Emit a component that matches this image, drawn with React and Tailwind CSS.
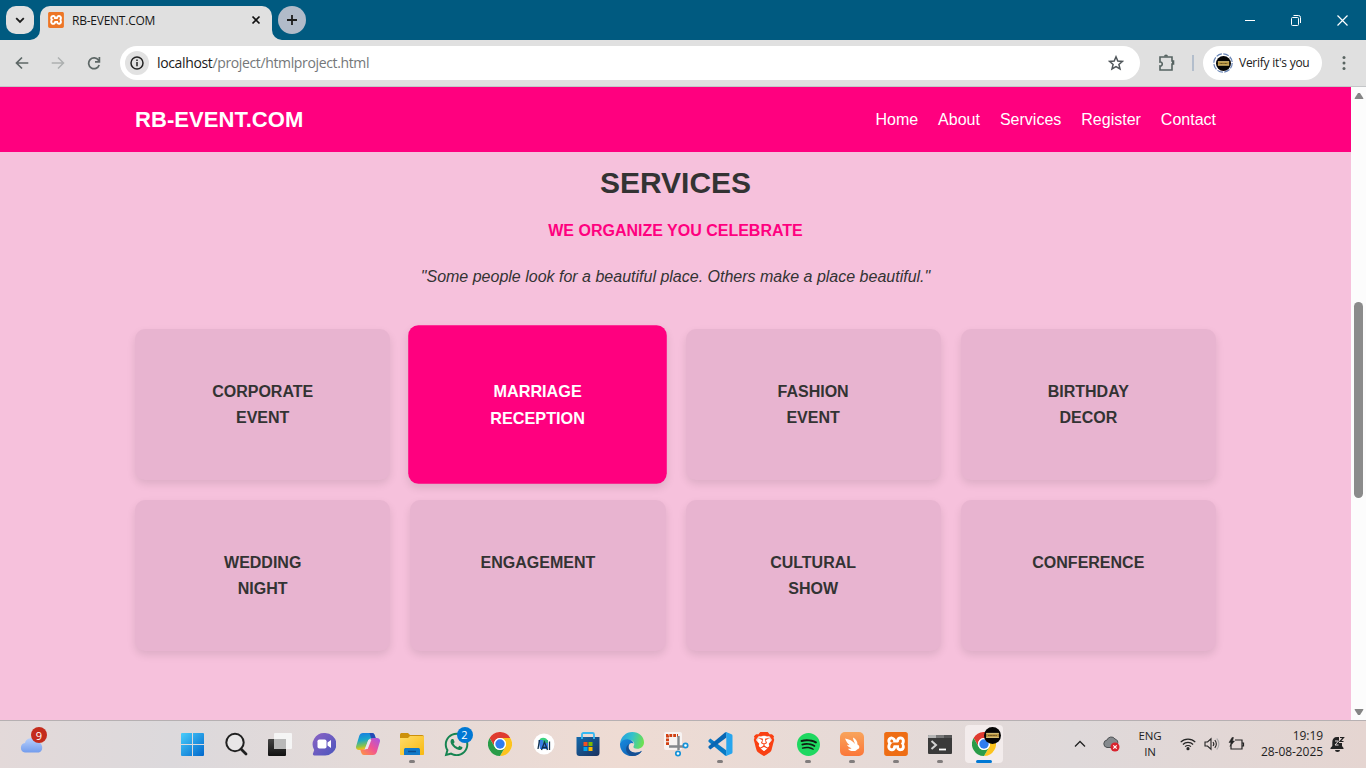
import React from "react";
import { SiXampp, SiBrave, SiSpotify } from "react-icons/si";
import { FaWhatsapp } from "react-icons/fa";

const Xampp = ({ className, box }) => (
  <span className={`flex items-center justify-center ${className}`}>
    <SiXampp className={box} />
  </span>
);

function Chrome() {
  return (
    <svg width="24" height="24" viewBox="0 0 48 48">
      <circle cx="24" cy="24" r="24" fill="#fff" />
      <path d="M24 12h20.8A24 24 0 0 0 3.2 12l10.4 18A12 12 0 0 1 24 12z" fill="#df3b30" />
      <path d="M34.4 30L24 48a24 24 0 0 0 20.8-36H24a12 12 0 0 1 10.4 18z" fill="#fcc31e" />
      <path d="M13.6 30L3.2 12A24 24 0 0 0 24 48l10.4-18a12 12 0 0 1-20.8 0z" fill="#2a9c48" />
      <circle cx="24" cy="24" r="12" fill="#fff" />
      <circle cx="24" cy="24" r="9.4" fill="#2f7cf0" />
    </svg>
  );
}

function Profile({ size }) {
  return (
    <svg width={size} height={size} viewBox="0 0 16 16">
      <circle cx="8" cy="8" r="8" fill="#050505" />
      <rect x="2" y="6" width="12" height="4" fill="#b99542" />
      <path d="M2 6h12M2 9.800h12" stroke="#f1d98c" strokeWidth=".8" />
      <path d="M4 8h8" stroke="#5f4d22" strokeWidth="1.100" strokeDasharray="1 .4" />
    </svg>
  );
}

const icons = {
  windows: (
    <svg width="23" height="23" viewBox="0 0 23 23">
      <defs>
        <linearGradient id="win" gradientUnits="userSpaceOnUse" x1="0" y1="0" x2="23" y2="23">
          <stop stopColor="#49cdfb" />
          <stop offset="1" stopColor="#0067cc" />
        </linearGradient>
      </defs>
      <path fill="url(#win)" d="M1 0h10v11H0V1a1 1 0 0 1 1-1zM12 0h10a1 1 0 0 1 1 1v10H12zM0 12h11v11H1a1 1 0 0 1-1-1zM12 12h11v10a1 1 0 0 1-1 1H12z" />
    </svg>
  ),
  search: (
    <svg width="24" height="24" viewBox="0 0 24 24" fill="none" stroke="#202020">
      <circle cx="11" cy="10.500" r="8.700" strokeWidth="2" fill="#e8e6e7" />
      <path d="M17 17l5 5" strokeWidth="2.800" strokeLinecap="round" />
    </svg>
  ),
  tasks: (
    <svg width="24" height="23" viewBox="0 0 24 23">
      <defs>
        <linearGradient id="tv" x1="0" y1="0" x2="0" y2="1">
          <stop stopColor="#444" />
          <stop offset="1" stopColor="#111" />
        </linearGradient>
      </defs>
      <rect y="6" width="18" height="17" rx="1" fill="url(#tv)" />
      <rect x="6" width="18" height="16" rx="1" fill="#f5f5f5" />
      <path d="M6 6h12v10H6z" fill="#b9b9b9" />
    </svg>
  ),
  meet: (
    <svg width="24" height="24" viewBox="0 0 24 24">
      <defs>
        <linearGradient id="mt" x1="0" y1="0" x2="1" y2="1">
          <stop stopColor="#8c63c4" />
          <stop offset="1" stopColor="#4a55bd" />
        </linearGradient>
      </defs>
      <path d="M12 1a11.300 11.300 0 1 1 0 22.500H2.200a1.400 1.400 0 0 1-1.200-2L2.200 18A11.300 11.300 0 0 1 12 1z" fill="url(#mt)" />
      <rect x="5.500" y="7.500" width="9" height="9" rx="1.800" fill="#fff" />
      <path d="M15.500 10.500L19 8v8l-3.500-2.500z" fill="#fff" />
    </svg>
  ),
  copilot: (
    <svg width="24" height="22" viewBox="0 0 24 22">
      <defs>
        <linearGradient id="c1" x1="0" y1="0" x2=".2" y2="1">
          <stop stopColor="#1679e4" />
          <stop offset=".45" stopColor="#19a7c9" />
          <stop offset=".8" stopColor="#8bc34b" />
          <stop offset="1" stopColor="#ffc20e" />
        </linearGradient>
        <linearGradient id="c2" x1="1" y1="0" x2="0" y2="1">
          <stop stopColor="#a355e8" />
          <stop offset=".5" stopColor="#f15492" />
          <stop offset="1" stopColor="#ff9a3d" />
        </linearGradient>
      </defs>
      <path d="M7 0h9c2 0 2.500 1.500 3 3l.8 2.500H15c-1.800 0-2.500 1-3 2.500l-2 6c-.7 2-1.700 3-3.700 3H3c-2.400 0-3.500-1.600-2.800-4L3.200 3C3.900 1 5 0 7 0z" fill="url(#c1)" />
      <path d="M13.500 0H16c2 0 2.500 1.500 3 3l.8 2.500h-4.600z" fill="#244ab5" />
      <path d="M17 22H8c-2 0-2.500-1.500-3-3l-.8-2.500H9c1.800 0 2.500-1 3-2.500l2-6c.7-2 1.700-3 3.700-3H21c2.400 0 3.500 1.600 2.800 4l-3 10c-.7 2-1.800 3-3.800 3z" fill="url(#c2)" />
      <path d="M12.300 7h3l-3.600 9H8.800z" fill="#eee3f0" />
    </svg>
  ),
  folder: (
    <svg width="24" height="22" viewBox="0 0 24 22">
      <defs>
        <linearGradient id="fo" x1="0" y1="0" x2="1" y2="1">
          <stop stopColor="#ffdc69" />
          <stop offset="1" stopColor="#f8b911" />
        </linearGradient>
      </defs>
      <path d="M0 2C0 .6.700 0 2 0h6l2 2h12c1.300 0 2 .7 2 2v5H0z" fill="#cc900b" />
      <path d="M0 5h8l2-2h13c.7 0 1 .4 1 1v17c0 .6-.4 1-1 1H1c-.6 0-1-.4-1-1z" fill="url(#fo)" />
      <path d="M4 22v-5c0-1.400.7-2 2-2h12c1.300 0 2 .6 2 2v5z" fill="#1179c8" />
      <path d="M8 18.500h8" stroke="#0b4f91" strokeWidth="1.500" />
    </svg>
  ),
  whatsapp: (
    <span className="relative block">
      <FaWhatsapp className="h-[27px] w-[27px] text-[#168451]" />
      <span className="absolute -top-[4px] left-[14px] flex h-4 w-4 items-center justify-center rounded-full bg-[#0078d4] text-[11px] leading-none text-white">2</span>
    </span>
  ),
  chrome: <Chrome />,
  studio: (
    <svg width="22" height="22" viewBox="0 0 22 22">
      <circle cx="11" cy="11" r="10.500" fill="#fff" />
      <path d="M6 8C6.500 3.500 13.500 3.500 15 8z" fill="#38d27f" />
      <path d="M5.500 7h9.500v9H7z" fill="#397fe4" />
      <path d="M10 7h5v3h-5z" fill="#2fae85" />
      <path d="M5 16l1.500-9M8.500 17l3-8 3 8M9.500 14.500h4M16.500 8.500V17" stroke="#12304b" strokeWidth="1.300" fill="none" />
    </svg>
  ),
  store: (
    <svg width="24" height="24" viewBox="0 0 24 24">
      <defs>
        <linearGradient id="st" x1="0" y1="0" x2="1" y2="1">
          <stop stopColor="#1369ac" />
          <stop offset="1" stopColor="#1c315d" />
        </linearGradient>
      </defs>
      <path d="M.5 5h23v16a3 3 0 0 1-3 3h-17a3 3 0 0 1-3-3z" fill="url(#st)" />
      <path d="M6 7V2.500c0-1 .5-1.500 1.500-1.500h9c1 0 1.500.5 1.500 1.500V7" stroke="#36b8f2" strokeWidth="1.800" fill="none" />
      <path d="M7.500 10h4v4h-4z" fill="#f25022" />
      <path d="M12.500 10h4v4h-4z" fill="#7fba00" />
      <path d="M7.500 15h4v4h-4z" fill="#00a4ef" />
      <path d="M12.500 15h4v4h-4z" fill="#ffb900" />
    </svg>
  ),
  edge: (
    <svg width="24" height="24" viewBox="0 0 24 24">
      <defs>
        <linearGradient id="e1" x1="0" y1=".2" x2="1" y2=".4">
          <stop stopColor="#229ee1" />
          <stop offset=".5" stopColor="#35c1cb" />
          <stop offset="1" stopColor="#6be052" />
        </linearGradient>
        <linearGradient id="e2" x1="0" y1="0" x2="1" y2="1">
          <stop stopColor="#168ae0" />
          <stop offset="1" stopColor="#1257a4" />
        </linearGradient>
      </defs>
      <path d="M0 11.500C1 4.500 6 0 12.300 0 19 0 24 4.700 24 10.200c0 4-3 6.500-6.700 6.500-3.200 0-4.500-1.200-3.600-2.700 1.700-3-.7-6-4.200-6C5 7.500 1 9.500 0 11.500z" fill="url(#e1)" />
      <path d="M0 11.500C1.500 8.500 5 7 8.500 7.400c2.500.2 5 2 5.200 4.200-1-1-3-1-4.200.5-2.700 3.500.5 8.500 5.800 8.600 3 .1 5.200-1 6.700-2-2 3.500-5.600 5.300-10 5.300C5 24-.3 18.700 0 11.500z" fill="url(#e2)" />
      <path d="M9.500 12.100c-3 3.500.5 8.700 5.800 8.600 2.600 0 5-.8 6.700-2-2 3.500-5.600 5.300-10 5.300-7-1.700-7.800-10-2.500-11.900z" fill="#164f93" />
    </svg>
  ),
  snip: (
    <svg width="25" height="25" viewBox="0 0 25 25">
      <rect x="0" y="0" width="18" height="18" rx="2" fill="#f7f3f2" />
      <path d="M3.500 13V3.500H14" fill="none" stroke="#d14012" strokeWidth="3" strokeDasharray="2.800 1" />
      <path d="M14.500 4v14M5 14.500h14" stroke="#85888c" strokeWidth="2.400" />
      <circle cx="21.500" cy="13.500" r="2.200" fill="#fff" stroke="#1592d8" strokeWidth="1.700" />
      <circle cx="14" cy="21.500" r="2.200" fill="#fff" stroke="#1592d8" strokeWidth="1.700" />
    </svg>
  ),
  code: (
    <svg width="25" height="24" viewBox="0 0 25 24">
      <path d="M.5 8.300L2.300 6.500 18.500 18.500V24L17 23.500.5 9.700z" fill="#0879c5" />
      <path d="M.5 15.700l1.800 1.800L18.500 5.500V0L17 .5.500 14.300z" fill="#0866b3" />
      <path d="M18 0l5.500 2.300c.6.300 1 .8 1 1.500v16.400c0 .7-.4 1.200-1 1.500L18 24c-.7 0-1-.4-1.400-.8.900.5 1.700 0 1.700-1V1.800c0-1-.8-1.500-1.700-1C17 .4 17.300 0 18 0z" fill="#27a5ee" />
    </svg>
  ),
  brave: (
    <span className="relative flex items-center justify-center">
      <span className="absolute h-4 w-[14px] rounded-full bg-white" />
      <SiBrave className="relative h-6 w-6 text-[#fa4013]" />
    </span>
  ),
  spotify: (
    <span className="relative flex items-center justify-center">
      <span className="absolute h-5 w-5 rounded-full bg-[#101b13]" />
      <SiSpotify className="relative h-[23px] w-[23px] text-[#1fd861]" />
    </span>
  ),
  bird: (
    <span className="flex h-6 w-6 items-center justify-center rounded-[5px] bg-linear-to-b from-[#f8a45c] to-[#fb7638]">
      <svg width="20" height="20" viewBox="0 0 20 20">
        <path d="M3 4.500C7 5 11 7 13 10c-1-2.800-2-4.500-2-6.500 3 1.500 4.500 4 4.500 7 1.800.8 2.200 2.500 1.500 4-2 .3-2 2.500-5 2.500-3 .2-5-.8-6-2.300 1.500.2 2.700 0 3.500-.5-2.500-.7-4-2-4.500-3.500 1 .4 1.800.5 2.500.4C5.500 9.500 4 7 3 4.500z" fill="#fff" />
      </svg>
    </span>
  ),
  xampp: <Xampp className="h-6 w-6 rounded-[4px] bg-white text-[#ee6d14]" box="h-6 w-6" />,
  terminal: (
    <svg width="24" height="19" viewBox="0 0 24 19">
      <rect width="24" height="19" rx="1" fill="#3a3a3a" />
      <path d="M0 1c0-.6.400-1 1-1h7v3H0z" fill="#b5b5b5" />
      <path d="M8 0h8v3H8z" fill="#777" />
      <path d="M16 0h7c.6 0 1 .4 1 1v2h-8z" fill="#555" />
      <path d="M3.500 6l4.500 4-4.500 4" fill="none" stroke="#d2d2d2" strokeWidth="2" />
      <path d="M11 14.500h7" stroke="#fff" strokeWidth="1.800" />
    </svg>
  ),
};

const taskItems = [
  ["windows"], ["search"], ["tasks"], ["meet"], ["copilot"], ["folder", true], ["whatsapp"], ["chrome"], ["studio"],
  ["store"], ["edge"], ["snip"], ["code", true], ["brave"], ["spotify", true], ["bird", true], ["xampp", true], ["terminal", true],
];

const cards = [
  ["CORPORATE", "EVENT"], ["MARRIAGE", "RECEPTION"], ["FASHION", "EVENT"], ["BIRTHDAY", "DECOR"],
  ["WEDDING", "NIGHT"], ["ENGAGEMENT"], ["CULTURAL", "SHOW"], ["CONFERENCE"],
];

function TabStrip() {
  return (
    <div className="flex h-10 shrink-0 items-start bg-[#005a80] pl-1.5 pt-1.5">
      <button className="flex h-7 w-7 items-center justify-center rounded-[10px] bg-[#e0e0e0]">
        <svg width="10" height="7" viewBox="0 0 10 7" fill="none" stroke="#1c1c1c" strokeWidth="1.800"><path d="M1.200 1.200L5 5l3.800-3.800" /></svg>
      </button>
      <div className="relative ml-1.5 flex h-[34px] w-[232px] items-start rounded-t-[10px] bg-[#e0e0e0] pl-2 pt-1.5">
        <svg className="absolute bottom-0 -left-[10px]" width="10" height="10"><path d="M10 0v10H0A10 10 0 0 0 10 0" fill="#e0e0e0" /></svg>
        <svg className="absolute bottom-0 -right-[10px]" width="10" height="10"><path d="M0 0v10h10A10 10 0 0 1 0 0" fill="#e0e0e0" /></svg>
        <Xampp className="h-4 w-4 rounded-[3px] bg-white text-[#ed7626]" box="h-4 w-4" />
        <span className="ml-2 w-[179px] text-[12px] leading-[17px] tracking-[-0.240px] text-[#161616]">RB-EVENT.COM</span>
        <svg className="mt-[3px]" width="10" height="10" viewBox="0 0 10 10" stroke="#111" strokeWidth="1.700"><path d="M1.500 1.500l7 7M8.500 1.500l-7 7" /></svg>
      </div>
      <button className="ml-1.5 flex h-7 w-7 items-center justify-center rounded-full bg-[#b1bbc9]">
        <svg width="10" height="10" viewBox="0 0 10 10" stroke="#1d1d1d" strokeWidth="1.800"><path d="M5 0v10M0 5h10" /></svg>
      </button>
      <div className="mt-[9px] mr-[18px] ml-auto flex items-center gap-9">
        <svg width="10" height="10" stroke="#fff"><path d="M0 4.500h10" /></svg>
        <svg width="10" height="11" viewBox="0 0 10 11" stroke="#fff" fill="none"><rect x=".5" y="2.500" width="7" height="8" rx="1" /><path d="M2.500 .5h5a2 2 0 0 1 2 2V8" /></svg>
        <svg width="11" height="11" viewBox="0 0 11 11" stroke="#fff" strokeWidth="1.200"><path d="M.5.5l10 10M10.500.5l-10 10" /></svg>
      </div>
    </div>
  );
}

function Toolbar() {
  return (
    <div className="flex h-[47px] shrink-0 items-start border-b border-[#c4c6c8] bg-[#e0e0e0] pt-1.5">
      <div className="flex h-[34px] w-[120px] items-center gap-[22px] pl-[15px]">
        <svg width="14" height="14" viewBox="0 0 14 14" fill="none" stroke="#5d6766" strokeWidth="1.700"><path d="M13.300 7H1.800M7 1.500L1.500 7 7 12.500" /></svg>
        <svg width="14" height="14" viewBox="0 0 14 14" fill="none" stroke="#adb0b0" strokeWidth="1.500"><path d="M.7 7h11.500M7 1.500L12.500 7 7 12.500" /></svg>
        <svg width="14" height="14" viewBox="0 0 14 14" fill="none" stroke="#5d6766" strokeWidth="1.700"><path d="M12.200 9A5.400 5.400 0 1 1 11.500 4.200L12.500 5.300M12.400 1v4.800H8" /></svg>
      </div>
      <div className="flex h-[34px] w-[1020px] items-center rounded-full bg-white pr-4 pl-[5px]">
        <span className="flex h-6 w-6 items-center justify-center rounded-full bg-[#e2e2e2]">
          <svg width="14" height="14" viewBox="0 0 14 14" fill="none" stroke="#242424" strokeWidth="1.500"><circle cx="7" cy="7" r="6" /><path d="M7 6v4.200M7 3.500v1.600" /></svg>
        </span>
        <span className="-mt-0.5 ml-2 text-[14px] tracking-[-0.360px] text-[#747779]"><span className="text-[#1b1b1b]">localhost</span>/project/htmlproject.html</span>
        <svg className="ml-auto" width="16" height="16" viewBox="0 0 16 16" fill="none" stroke="#50565a" strokeWidth="1.500"><path d="M8 1.800l1.800 4.200 4.600.4-3.500 3 1.100 4.500L8 11.500l-4 2.400 1.100-4.500-3.500-3L6.200 6z" /></svg>
      </div>
      <div className="flex h-[34px] items-center">
        <svg className="ml-[18px]" width="18" height="18" viewBox="0 0 18 18"><path d="M2 3h12v4h1.500v3H14v6H2v-4c3 .3 3-4.500 0-4z" fill="none" stroke="#566361" strokeWidth="1.600" /><path d="M6 2.500a2 2 0 0 1 4 0zM14 6.500a2 2 0 0 1 0 4z" fill="#566361" /></svg>
        <span className="ml-4 h-4 w-0.5 bg-[#b3becc]" />
        <div className="ml-[9px] flex h-[34px] w-[119px] items-center rounded-full bg-white pl-2.5">
          <span className="relative flex h-5 w-5 items-center justify-center">
            <svg className="absolute" width="20" height="20"><circle cx="10" cy="10" r="9.200" fill="none" stroke="#6784b5" strokeWidth="1.200" strokeDasharray="5.800 1.425" /></svg>
            <Profile size={15} />
          </span>
          <span className="ml-1.5 text-[12px] tracking-[-0.260px] whitespace-nowrap text-[#202020]">Verify it's you</span>
        </div>
        <svg className="ml-5" width="4" height="16" fill="#596461"><circle cx="2" cy="2.500" r="1.500" /><circle cx="2" cy="8" r="1.500" /><circle cx="2" cy="13.500" r="1.500" /></svg>
      </div>
    </div>
  );
}

function Site() {
  return (
    <main className="min-w-0 flex-1 overflow-hidden bg-[#f6c1dc] font-['Liberation_Sans',sans-serif] text-[#333]">
      <header className="flex h-[65px] items-center justify-between bg-[#ff007f] px-[135px] text-white">
        <h1 className="text-[22px] font-bold tracking-[0.080px]">RB-EVENT.COM</h1>
        <nav className="flex gap-5 text-base">
          <a>Home</a><a>About</a><a>Services</a><a>Register</a><a>Contact</a>
        </nav>
      </header>
      <section className="px-[135.100px] pt-[7px] text-center">
        <h2 className="text-[30px] leading-[48px] font-bold">SERVICES</h2>
        <h3 className="mt-[11px] text-base leading-[26px] font-bold text-[#ff007f]">WE ORGANIZE YOU CELEBRATE</h3>
        <p className="mt-5 text-base leading-[26px] italic">"Some people look for a beautiful place. Others make a place beautiful."</p>
        <div className="mt-[39px] grid grid-cols-4 gap-5">
          {cards.map((lines, i) => (
            <div
              key={i}
              className={`h-[151.200px] rounded-[10px] pt-[50px] text-base leading-[25.600px] font-bold shadow-[0_4px_8px_rgba(0,0,0,0.1)] ${
                i === 1 ? "scale-x-[1.014] scale-y-[1.050] bg-[#ff007f] text-white" : "bg-[#e8b4d0]"
              }`}
            >
              {lines.map((l) => <div key={l}>{l}</div>)}
            </div>
          ))}
        </div>
      </section>
    </main>
  );
}

function Taskbar() {
  return (
    <div className="flex h-12 shrink-0 border-t border-[#b6b0b2] text-[#1f1f1f]">
      <div className="flex h-full w-[170px] items-start bg-linear-to-r from-[#e3d9d9] to-[#dcd9dc] pt-[9px] pl-5">
        <span className="relative">
          <svg className="mt-[7px]" width="24" height="16" viewBox="0 0 24 16">
            <defs><linearGradient id="cl" x1="0" y1="0" x2="0" y2="1"><stop stopColor="#b8d0fb" /><stop offset="1" stopColor="#739ced" /></linearGradient></defs>
            <path d="M5 15.500A4.800 4.800 0 0 1 5 6a6 6 0 0 1 11.500-1A5.500 5.500 0 0 1 19 15.500z" fill="url(#cl)" />
          </svg>
          <span className="absolute -top-[3px] left-[11px] flex h-4 w-4 items-center justify-center rounded-full bg-[#c42b1c] text-[11px] leading-none text-white">9</span>
        </span>
      </div>
      <div className="flex flex-1 bg-linear-to-r from-[#dcd9dc] via-[#eedbd3] to-[#dfd9da]">
        {taskItems.map(([name, open]) => (
          <div key={name} className="relative flex h-[46px] w-11 items-center justify-center">
            {icons[name]}
            {open && <span className="absolute bottom-1 left-[19px] h-[3px] w-1.5 rounded-full bg-[#817d7d]" />}
          </div>
        ))}
        <div className="relative ml-[3px] mt-1 flex h-[38px] w-[38px] items-center justify-center rounded bg-[#f3ecec]">
          <Chrome />
          <span className="absolute top-0.5 right-0.5"><Profile size={17} /></span>
          <span className="absolute bottom-0 left-[11px] h-[3px] w-4 rounded-full bg-[#0078d4]" />
        </div>
      </div>
      <div className="flex h-[46px] w-[293px] items-center bg-linear-to-r from-[#dfd9da] to-[#e5d5d1] pb-px text-[12px] box-content">
        <svg className="ml-px" width="12" height="8" viewBox="0 0 12 8" fill="none" stroke="#222" strokeWidth="1.300"><path d="M1 6.500l5-5 5 5" /></svg>
        <svg className="ml-[17px]" width="17" height="16" viewBox="0 0 17 16">
          <path d="M4 11.500A3.800 3.800 0 0 1 4 4a4.500 4.500 0 0 1 8-1 4 4 0 0 1 2.500 5l-5 3.500z" fill="#85898d" stroke="#4d5053" />
          <circle cx="12" cy="11" r="4.500" fill="#d9232e" /><path d="M10.300 9.300l3.400 3.400M13.700 9.300l-3.400 3.400" stroke="#fff" strokeWidth="1.200" />
        </svg>
        <div className="ml-3.5 w-[32px] text-center text-[11.500px] leading-4 tracking-[-0.100px]">ENG<br />IN</div>
        <svg className="ml-3.5" width="16" height="14" viewBox="0 0 16 14" fill="none" stroke="#252525" strokeWidth="1.200"><path d="M.7 5.200a10.300 10.300 0 0 1 14.600 0M2.900 7.500a7.200 7.200 0 0 1 10.200 0M5.100 9.700a4.100 4.100 0 0 1 5.800 0" /><circle cx="8" cy="11.700" r="1" fill="#252525" /></svg>
        <svg className="ml-2" width="16" height="14" viewBox="0 0 16 14" fill="none" stroke="#252525" strokeWidth="1.100"><path d="M1 5h2.500L7 1.800v10.400L3.500 9H1zM9 5a3 3 0 0 1 0 4M10.800 3.200a5.500 5.500 0 0 1 0 7.600" /><path d="M12.700 1.500a8 8 0 0 1 0 11" stroke="#aaa" /></svg>
        <svg className="ml-2" width="17" height="14" viewBox="0 0 17 14" fill="none" stroke="#252525" strokeWidth="1.200"><path d="M7 3h7v9H3V8M3 12V8M14 6h1.500v3H14" /><path d="M4 .5L1 5.500h2L2 9.500l4.500-5.500H4.500L5.500.500z" fill="#252525" strokeWidth=".5" /></svg>
        <div className="ml-3 w-[66px] text-right text-[12px] leading-4 tracking-[-0.060px] whitespace-nowrap">19:19<br />28-08-2025</div>
        <svg className="ml-[7px]" width="15" height="16" viewBox="0 0 15 16"><path d="M7 1C4 1 2.300 3 2.300 6v4L.5 12v1h13v-1L12 10V7H9V1zM5 14h5a2.500 2 0 0 1-5 0z" fill="#222" /><path d="M5 5h3.500L5 9h3.500" fill="none" stroke="#e5dada" /><path d="M10 1.500h3.500L10 5.500h3.500" fill="none" stroke="#222" strokeWidth="1.200" /></svg>
      </div>
    </div>
  );
}

export default function App() {
  return (
    <div className="flex h-[768px] w-[1366px] flex-col overflow-hidden font-['Open_Sans','Noto_Sans',sans-serif]">
      <TabStrip />
      <Toolbar />
      <div className="flex h-[633px] shrink-0">
        <Site />
        <div className="flex w-[15px] flex-col items-center bg-[#fcfcfc]">
          <svg className="mt-[5px]" width="10" height="8"><path d="M4 1h2l3.500 5.500-.5.500H1l-.5-.5z" fill="#858585" /></svg>
          <div className="mt-[202px] h-[196px] w-[9px] rounded-full bg-[#8b8b8b]" />
          <svg className="mt-auto mb-1" width="10" height="8"><path d="M4 7h2l3.500-5.500L9 1H1l-.5.500z" fill="#858585" /></svg>
        </div>
      </div>
      <Taskbar />
    </div>
  );
}
